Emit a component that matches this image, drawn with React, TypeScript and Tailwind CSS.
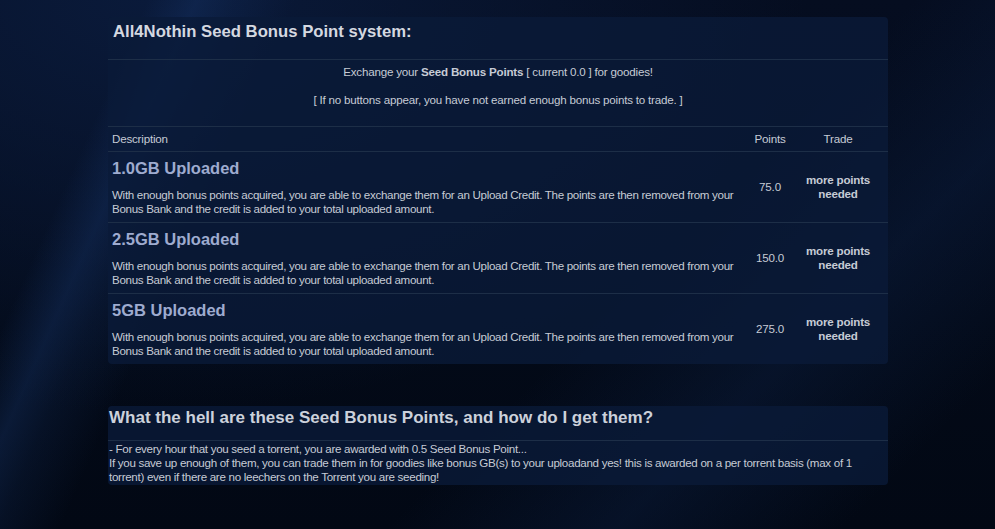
import React from "react";

const rows = [
  { title: "1.0GB Uploaded", points: "75.0" },
  { title: "2.5GB Uploaded", points: "150.0" },
  { title: "5GB Uploaded", points: "275.0" },
];

export default function App() {
  return (
    <div className="min-h-[529px] w-full overflow-hidden bg-[linear-gradient(114deg,transparent_0%,transparent_12%,rgba(22,52,104,0.4)_16%,rgba(22,52,104,0.2)_19%,transparent_24%),linear-gradient(135deg,transparent_60%,rgba(14,36,76,0.35)_75%,transparent_90%),radial-gradient(ellipse_at_15%_0%,#0a1a3a_0%,transparent_55%),linear-gradient(180deg,#050d20_0%,#030a18_60%,#020814_100%)] pt-[17px] font-['Liberation_Sans',Arial,sans-serif] text-[11.6px] leading-[14px] tracking-[-0.2px] text-[#c6cbd5]">
      <div className="ml-[108px] w-[780px]">
        <div className="rounded-[4px] bg-[#0a1a38]/80">
          <div className="h-[43px] border-b border-[#1d2e47] px-[5px] pt-[5px] text-[16.7px] font-bold leading-[20px] tracking-normal text-[#d4d8e0]">
            All4Nothin Seed Bonus Point system:
          </div>
          <div className="h-[67px] border-b border-[#1d2e47] pt-[5px] text-center">
            <div>
              Exchange your <span className="font-bold">Seed Bonus Points</span> [ current 0.0 ] for goodies!
            </div>
            <div className="mt-[14px]">
              [ If no buttons appear, you have not earned enough bonus points to trade. ]
            </div>
          </div>
          <div className="grid h-[25px] grid-cols-[642px_40px_98px] border-b border-[#1d2e47] pt-[5px]">
            <div className="pl-[4px]">Description</div>
            <div className="text-center">Points</div>
            <div className="pr-[2px] text-center">Trade</div>
          </div>
          {rows.map((r, i) => (
            <div
              key={r.title}
              className={
                i < rows.length - 1
                  ? "grid h-[71px] grid-cols-[642px_40px_98px] border-b border-[#1d2e47]"
                  : "grid h-[70px] grid-cols-[642px_40px_98px]"
              }
            >
              <div className="pl-[4px] pt-[6px]">
                <div className="text-[16.5px] font-bold leading-[20px] tracking-normal text-[#9eabcf]">{r.title}</div>
                <div className="mt-[10px] whitespace-nowrap tracking-[-0.32px]">
                  <div>
                    With enough bonus points acquired, you are able to exchange them for an Upload Credit. The points are then removed from your
                  </div>
                  <div>Bonus Bank and the credit is added to your total uploaded amount.</div>
                </div>
              </div>
              <div className="flex items-center justify-center">{r.points}</div>
              <div className="flex items-center justify-center pr-[2px] text-center font-bold">
                more points
                <br />
                needed
              </div>
            </div>
          ))}
        </div>

        <div className="mt-[42px] rounded-[4px] bg-[#0a1a38]/80">
          <div className="h-[35px] border-b border-[#1d2e47] pl-[1px] pt-[1px] text-[17px] font-bold leading-[22px] tracking-normal text-[#ccd1db]">
            What the hell are these Seed Bonus Points, and how do I get them?
          </div>
          <div className="whitespace-nowrap pb-[1px] pl-[1px] pt-[1px] tracking-[-0.3px]">
            <div>- For every hour that you seed a torrent, you are awarded with 0.5 Seed Bonus Point...</div>
            <div>
              If you save up enough of them, you can trade them in for goodies like bonus GB(s) to your uploadand yes! this is awarded on a per torrent basis (max of 1
            </div>
            <div>torrent) even if there are no leechers on the Torrent you are seeding!</div>
          </div>
        </div>
      </div>
    </div>
  );
}
